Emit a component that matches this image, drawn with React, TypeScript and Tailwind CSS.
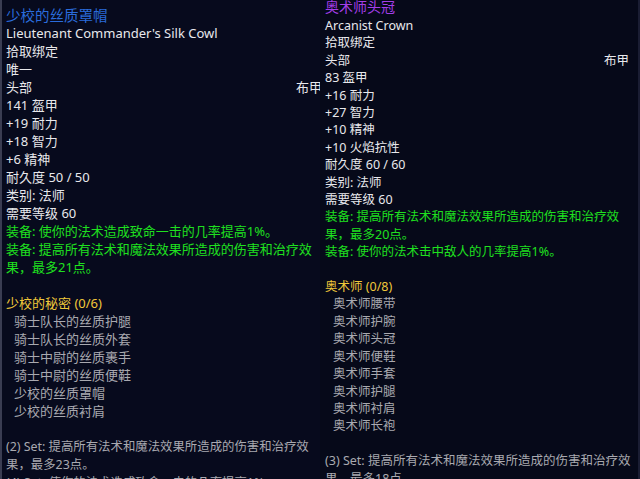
import React from 'react';

type Line = { text: string; color: string; indent?: boolean; right?: string; title?: boolean; small?: boolean };

const WHITE = 'text-[#e8e8ec]';
const GREEN = 'text-[#1fe01f]';
const GOLD = 'text-[#f0c83a]';
const GRAY = 'text-[#a9a9b0]';

// wrapped lines are split by hand so the breaks land where the game put them
const leftLines: (Line | null)[] = [
  { text: '少校的丝质罩帽', color: 'text-[#2a6cdc]', title: true },
  { text: "Lieutenant Commander's Silk Cowl", color: WHITE },
  { text: '拾取绑定', color: WHITE },
  { text: '唯一', color: WHITE },
  { text: '头部', color: WHITE, right: '布甲' },
  { text: '141 盔甲', color: WHITE },
  { text: '+19 耐力', color: WHITE },
  { text: '+18 智力', color: WHITE },
  { text: '+6 精神', color: WHITE },
  { text: '耐久度 50 / 50', color: WHITE },
  { text: '类别: 法师', color: WHITE },
  { text: '需要等级 60', color: WHITE },
  { text: '装备: 使你的法术造成致命一击的几率提高1%。', color: GREEN },
  { text: '装备: 提高所有法术和魔法效果所造成的伤害和治疗效', color: GREEN },
  { text: '果，最多21点。', color: GREEN },
  null,
  { text: '少校的秘密 (0/6)', color: GOLD },
  { text: '骑士队长的丝质护腿', color: GRAY, indent: true },
  { text: '骑士队长的丝质外套', color: GRAY, indent: true },
  { text: '骑士中尉的丝质裹手', color: GRAY, indent: true },
  { text: '骑士中尉的丝质便鞋', color: GRAY, indent: true },
  { text: '少校的丝质罩帽', color: GRAY, indent: true },
  { text: '少校的丝质衬肩', color: GRAY, indent: true },
  null,
  { text: '(2) Set: 提高所有法术和魔法效果所造成的伤害和治疗效', color: GRAY, small: true },
  { text: '果，最多23点。', color: GRAY, small: true },
  { text: '(4) Set: 使你的法术造成致命一击的几率提高1%。', color: GRAY, small: true },
];

const rightLines: (Line | null)[] = [
  { text: '奥术师头冠', color: 'text-[#a43ee8]', title: true },
  { text: 'Arcanist Crown', color: WHITE },
  { text: '拾取绑定', color: WHITE },
  { text: '头部', color: WHITE, right: '布甲' },
  { text: '83 盔甲', color: WHITE },
  { text: '+16 耐力', color: WHITE },
  { text: '+27 智力', color: WHITE },
  { text: '+10 精神', color: WHITE },
  { text: '+10 火焰抗性', color: WHITE },
  { text: '耐久度 60 / 60', color: WHITE },
  { text: '类别: 法师', color: WHITE },
  { text: '需要等级 60', color: WHITE },
  { text: '装备: 提高所有法术和魔法效果所造成的伤害和治疗效', color: GREEN },
  { text: '果，最多20点。', color: GREEN },
  { text: '装备: 使你的法术击中敌人的几率提高1%。', color: GREEN },
  null,
  { text: '奥术师 (0/8)', color: GOLD },
  { text: '奥术师腰带', color: GRAY, indent: true },
  { text: '奥术师护腕', color: GRAY, indent: true },
  { text: '奥术师头冠', color: GRAY, indent: true },
  { text: '奥术师便鞋', color: GRAY, indent: true },
  { text: '奥术师手套', color: GRAY, indent: true },
  { text: '奥术师护腿', color: GRAY, indent: true },
  { text: '奥术师衬肩', color: GRAY, indent: true },
  { text: '奥术师长袍', color: GRAY, indent: true },
  null,
  { text: '(3) Set: 提高所有法术和魔法效果所造成的伤害和治疗效', color: GRAY },
  { text: '果，最多18点。', color: GRAY },
];

const Tooltip: React.FC<{ lines: (Line | null)[]; titleClass: string; rightClass: string }> = ({
  lines,
  titleClass,
  rightClass,
}) => (
  <>
    {lines.map((l, i) =>
      l === null ? (
        <div key={i} className="h-[1lh]" />
      ) : l.right ? (
        <div key={i} className={`flex justify-between whitespace-nowrap ${l.color}`}>
          <span>{l.text}</span>
          <span className={rightClass}>{l.right}</span>
        </div>
      ) : (
        <div
          key={i}
          className={`whitespace-nowrap ${l.color} ${l.indent ? 'pl-[8px]' : ''} ${l.title ? titleClass : ''} ${l.small ? 'text-[12.4px]' : ''}`}
        >
          {l.text}
        </div>
      )
    )}
  </>
);

const App: React.FC = () => {
  return (
    <div
      className="w-[640px] h-[479px] overflow-hidden flex bg-[#060919]"
      style={{ fontFamily: '"Noto Sans", "Noto Sans CJK SC", sans-serif' }}
    >
      {/* left tooltip */}
      <div className="w-[320px] shrink-0 border-l-2 border-[#3a3d52] pl-[4px] pt-[6px] text-[13px] leading-[18px] bg-[#070a1d] overflow-hidden">
        <Tooltip lines={leftLines} titleClass="text-[14.5px]" rightClass="mr-[-2px]" />
      </div>

      {/* right tooltip */}
      <div className="flex-1 min-w-0 pl-[5px] pr-[9px] mt-[-3px] text-[12.5px] leading-[17.4px] bg-[#060919] border-r-2 border-[#1a1d33] overflow-hidden">
        <Tooltip lines={rightLines} titleClass="text-[14px] leading-[20px]" rightClass="" />
      </div>
    </div>
  );
};

export default App;
